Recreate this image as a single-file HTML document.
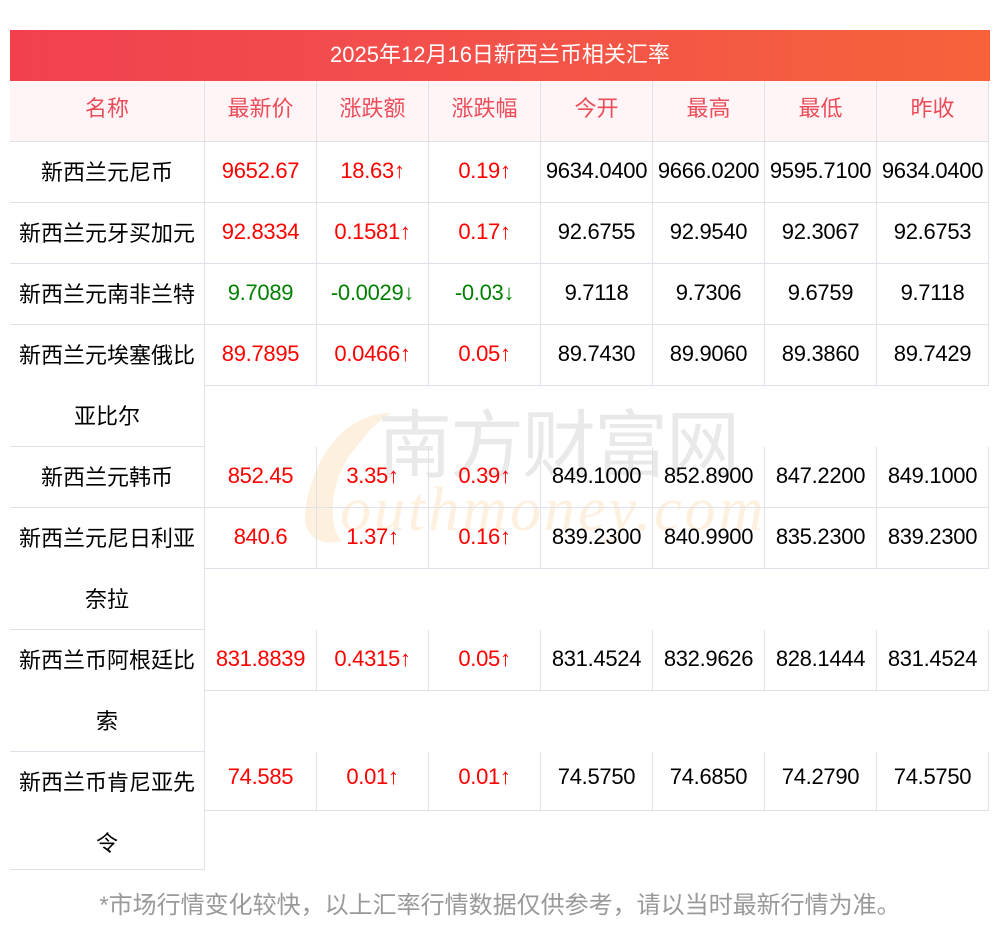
<!DOCTYPE html>
<html><head><meta charset="utf-8"><style>
*{margin:0;padding:0;box-sizing:border-box}
body{width:1000px;height:937px;background:#fff;position:relative;overflow:hidden;font-family:"Liberation Sans","Noto Sans CJK SC",sans-serif;}
.t{position:absolute;left:10px;top:30px;width:980px;height:51px;background:linear-gradient(90deg,#f2404f,#f3524a 50%,#f7623a);color:#fff;font-size:22px;text-align:center;line-height:49px}
.r{position:absolute;left:205px;width:784px;height:61px;display:flex}
.r div{width:112px;height:61px;border-right:1px solid #dfe1ea;border-bottom:1px solid #dfe1ea;text-align:center;line-height:58px;font-size:22px;color:#000;white-space:nowrap;letter-spacing:-0.3px}
.h{position:absolute;left:10px;top:81px;width:979px;height:61px;background:#fff5f6;display:flex}
.h div{height:61px;border-right:1px solid #dfe1ea;border-bottom:1px solid #dfe1ea;text-align:center;line-height:56px;font-size:22px;color:#ec4c59}
.n{position:absolute;left:10px;width:195px;border-right:1px solid #dfe1ea;border-bottom:1px solid #dfe1ea;text-align:center;line-height:61px;font-size:22px;color:#000}
.red{color:#ff0000!important}.grn{color:#008000!important}
.f{position:absolute;left:0;top:888px;width:1000px;text-align:center;font-size:24px;color:#999;line-height:36px}
.wm{position:absolute;pointer-events:none}
</style></head><body>
<div class="t">2025年12月16日新西兰币相关汇率</div>
<div class="h"><div style="width:195px">名称</div><div style="width:112px">最新价</div><div style="width:112px">涨跌额</div><div style="width:112px">涨跌幅</div><div style="width:112px">今开</div><div style="width:112px">最高</div><div style="width:112px">最低</div><div style="width:112px">昨收</div></div>

<svg class="wm" style="left:300px;top:405px" width="460" height="150" viewBox="0 0 460 150">
<path d="M92 8 C40 8 10 60 5 110 C3 130 20 142 42 136 C26 120 30 70 58 40 C68 26 80 14 92 8Z" fill="#fdf0de"/>
<text x="78" y="66" font-size="74" fill="#e9e9e9" font-family="Noto Sans CJK SC" letter-spacing="-2">南方财富网</text>
<text x="40" y="125" font-size="62" fill="#fdf0de" font-style="italic" font-family="Liberation Serif" letter-spacing="3">outhmoney.com</text>
</svg>

<div class="n" style="top:142px;height:61px">新西兰元尼币</div>
<div class="r" style="top:142px"><div class="red">9652.67</div><div class="red">18.63↑</div><div class="red">0.19↑</div><div>9634.0400</div><div>9666.0200</div><div>9595.7100</div><div>9634.0400</div></div>
<div class="n" style="top:203px;height:61px">新西兰元牙买加元</div>
<div class="r" style="top:203px"><div class="red">92.8334</div><div class="red">0.1581↑</div><div class="red">0.17↑</div><div>92.6755</div><div>92.9540</div><div>92.3067</div><div>92.6753</div></div>
<div class="n" style="top:264px;height:61px">新西兰元南非兰特</div>
<div class="r" style="top:264px"><div class="grn">9.7089</div><div class="grn">-0.0029↓</div><div class="grn">-0.03↓</div><div>9.7118</div><div>9.7306</div><div>9.6759</div><div>9.7118</div></div>
<div class="n" style="top:325px;height:122px">新西兰元埃塞俄比<br>亚比尔</div>
<div class="r" style="top:325px"><div class="red">89.7895</div><div class="red">0.0466↑</div><div class="red">0.05↑</div><div>89.7430</div><div>89.9060</div><div>89.3860</div><div>89.7429</div></div>
<div class="n" style="top:447px;height:61px">新西兰元韩币</div>
<div class="r" style="top:447px"><div class="red">852.45</div><div class="red">3.35↑</div><div class="red">0.39↑</div><div>849.1000</div><div>852.8900</div><div>847.2200</div><div>849.1000</div></div>
<div class="n" style="top:508px;height:122px">新西兰元尼日利亚<br>奈拉</div>
<div class="r" style="top:508px"><div class="red">840.6</div><div class="red">1.37↑</div><div class="red">0.16↑</div><div>839.2300</div><div>840.9900</div><div>835.2300</div><div>839.2300</div></div>
<div class="n" style="top:630px;height:122px">新西兰币阿根廷比<br>索</div>
<div class="r" style="top:630px"><div class="red">831.8839</div><div class="red">0.4315↑</div><div class="red">0.05↑</div><div>831.4524</div><div>832.9626</div><div>828.1444</div><div>831.4524</div></div>
<div class="n" style="top:752px;height:118px">新西兰币肯尼亚先<br>令</div>
<div class="r" style="top:752px;height:59px"><div class="red" style="height:59px;line-height:50px">74.585</div><div class="red" style="height:59px;line-height:50px">0.01↑</div><div class="red" style="height:59px;line-height:50px">0.01↑</div><div style="height:59px;line-height:50px">74.5750</div><div style="height:59px;line-height:50px">74.6850</div><div style="height:59px;line-height:50px">74.2790</div><div style="height:59px;line-height:50px">74.5750</div></div>
<div class="f">*市场行情变化较快，以上汇率行情数据仅供参考，请以当时最新行情为准。</div>
</body></html>
